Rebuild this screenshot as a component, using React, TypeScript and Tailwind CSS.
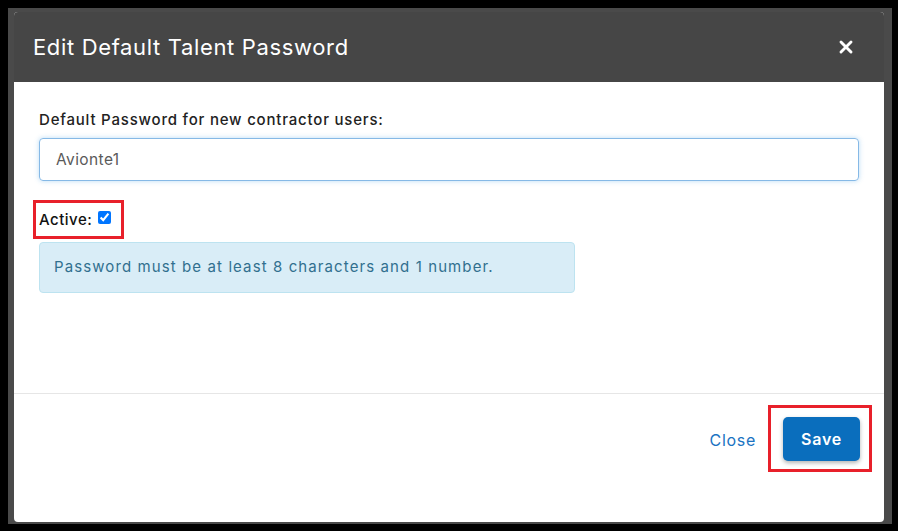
import { X } from "lucide-react";

export default function App() {
  return (
    <div
      className="h-[531px] w-[898px] bg-black pb-[7px] pl-2 pr-[6px] pt-2"
      style={{ fontFamily: "Inter, 'Open Sans', sans-serif" }}
    >
      <div className="h-full w-full bg-[#4a4a4a] pb-[2px] pl-[6px] pr-2 pt-1">
        <div className="flex h-full flex-col overflow-hidden rounded-[4px] bg-white">
          <header className="flex h-[70px] shrink-0 items-center justify-between bg-[#464646] pl-[19px] pr-[28px]">
            <h1 className="text-[22px] font-normal tracking-[0.65px] text-white">
              Edit Default Talent Password
            </h1>
            <button aria-label="Close" className="text-white">
              <X size={20} strokeWidth={3.5} />
            </button>
          </header>

          <section className="h-[312px] shrink-0 border-b border-[#e6e6e6] px-[25px] pt-[27px]">
            <label className="block text-[15px] font-medium leading-[22px] tracking-[0.8px] text-[#222]">
              Default Password for new contractor users:
            </label>
            <input
              className="mt-[7px] h-[43px] w-full rounded-[4px] border border-[#86b9e6] px-[16px] text-[15.5px] tracking-[0.4px] text-[#5a5a5a] shadow-[0_0_5px_rgba(102,175,233,0.45)] outline-none"
              defaultValue="Avionte1"
            />
            <div className="relative mt-[22px] inline-flex h-[34px] items-center gap-[6px]">
              <span className="text-[15px] font-medium tracking-[0.5px] text-[#111]">Active:</span>
              <input
                type="checkbox"
                defaultChecked
                className="m-0 h-[13px] w-[13px] -translate-y-[3px] accent-[#0075ff]"
              />
              <span className="pointer-events-none absolute -bottom-[2px] -left-[6px] -right-[13px] -top-[3px] border-[3px] border-[#e8202a]" />
            </div>
            <div className="mt-[5px] flex h-[51px] w-[536px] items-center rounded-[4px] border border-[#bde3f0] bg-[#d9edf7] px-[14px] text-[15px] tracking-[1.1px] text-[#31708f]">
              Password must be at least 8 characters and 1 number.
            </div>
          </section>

          <footer className="flex flex-1 items-start justify-end gap-[27px] pr-[24px] pt-[23px]">
            <button className="mt-[11px] text-[16px] tracking-[0.7px] text-[#1a73c2]">Close</button>
            <div className="relative">
              <button className="h-[44px] w-[77px] rounded-[5px] bg-[#0a6ebd] text-[16px] font-semibold tracking-[0.8px] text-white shadow-[0_2px_4px_rgba(0,0,0,0.3)]">
                Save
              </button>
              <span className="pointer-events-none absolute -bottom-[11px] -left-[15px] -right-[12px] -top-[12px] border-[3px] border-[#e8202a]" />
            </div>
          </footer>
        </div>
      </div>
    </div>
  );
}
